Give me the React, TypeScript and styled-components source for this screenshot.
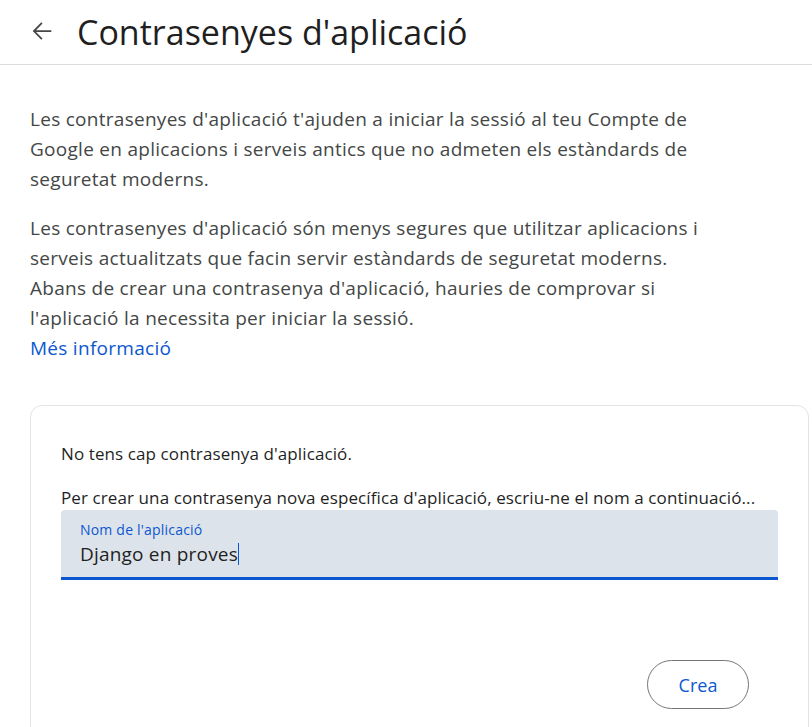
import React from "react";
import styled, { createGlobalStyle } from "styled-components";

const Global = createGlobalStyle`
  html, body { margin: 0; padding: 0; background: #ffffff; }
  body { font-family: "Open Sans", Roboto, "Liberation Sans", Arial, sans-serif; color: #1f1f1f; }
`;

const Page = styled.div`
  width: 812px;
  height: 727px;
  overflow: hidden;
`;

const Header = styled.header`
  height: 65px;
  border-bottom: 1px solid #dadce0;
  display: flex;
  align-items: center;
  padding-left: 27px;
  gap: 21px;
  box-sizing: border-box;
`;

const BackButton = styled.button`
  width: 29px;
  height: 29px;
  padding: 0;
  border: none;
  background: transparent;
  display: flex;
  align-items: center;
  justify-content: center;
  color: #444746;
  margin-top: -3px;
`;

const Title = styled.h1`
  margin: 0;
  font-family: "Open Sans", Inter, sans-serif;
  font-weight: 400;
  font-size: 34px;
  color: #1f1f1f;
  margin-top: -1px;
`;

const Content = styled.main`
  padding: 39px 0 0 30px;
  display: flex;
  flex-direction: column;
`;

const Para = styled.p<{ $last?: boolean }>`
  margin: 0 0 ${(p) => (p.$last ? 0 : 19)}px 0;
  font-size: 19px;
  letter-spacing: 0.28px;
  line-height: 30px;
  color: #444746;
  white-space: nowrap;
`;

const Link = styled.a`
  color: #0b57d0;
  text-decoration: none;
  display: block;
`;

const Card = styled.section`
  margin-top: 42px;
  margin-right: 3px;
  border: 1px solid #e3e3e3;
  border-radius: 12px;
  padding: 36px 30px 0 30px;
  height: 360px;
  display: flex;
  flex-direction: column;
`;

const CardText = styled.p`
  margin: 0;
  font-size: 17px;
  letter-spacing: 0.1px;
  line-height: 24px;
  color: #1f1f1f;
  white-space: nowrap;
`;

const Gap = styled.div<{ $h: number }>`
  height: ${(p) => p.$h}px;
`;

const Field = styled.div`
  width: 717px;
  height: 70px;
  background: #dde3ea;
  border-radius: 4px 4px 0 0;
  border-bottom: 3px solid #0b57d0;
  box-sizing: border-box;
  padding: 12px 19px 0 19px;
  display: flex;
  flex-direction: column;
`;

const FieldLabel = styled.label`
  font-size: 14px;
  letter-spacing: 0.2px;
  line-height: 16px;
  color: #0b57d0;
`;

const FieldValue = styled.div`
  font-size: 19px;
  letter-spacing: 0.2px;
  line-height: 28px;
  margin-top: 2px;
  color: #1f1f1f;
  display: flex;
  align-items: center;
`;

const Caret = styled.span`
  display: inline-block;
  width: 1px;
  height: 22px;
  background: #0b57d0;
`;

const Actions = styled.div`
  display: flex;
  justify-content: flex-end;
  padding-right: 29px;
  margin-top: 80px;
`;

const OutlineButton = styled.button`
  width: 102px;
  height: 49px;
  border: 1px solid #747775;
  border-radius: 25px;
  background: #ffffff;
  color: #0b57d0;
  font-family: "Open Sans", Inter, sans-serif;
  font-size: 18px;
  font-weight: 500;
  box-sizing: border-box;
`;

export default function App() {
  return (
    <>
      <Global />
      <Page>
        <Header>
          <BackButton aria-label="Enrere">
            <svg width="28" height="28" viewBox="0 0 24 24" fill="currentColor">
              <path d="M20 11.25H6.87l5.6-5.6L11.4 4.6 4 12l7.4 7.4 1.07-1.05-5.6-5.6H20v-1.5z" />
            </svg>
          </BackButton>
          <Title>Contrasenyes d'aplicació</Title>
        </Header>
        <Content>
          <Para>
            Les contrasenyes d'aplicació t'ajuden a iniciar la sessió al teu Compte de
            <br />
            Google en aplicacions i serveis antics que no admeten els estàndards de
            <br />
            seguretat moderns.
          </Para>
          <Para $last>
            Les contrasenyes d'aplicació són menys segures que utilitzar aplicacions i
            <br />
            serveis actualitzats que facin servir estàndards de seguretat moderns.
            <br />
            Abans de crear una contrasenya d'aplicació, hauries de comprovar si
            <br />
            l'aplicació la necessita per iniciar la sessió.
            <Link href="#">Més informació</Link>
          </Para>
          <Card>
            <CardText>No tens cap contrasenya d'aplicació.</CardText>
            <Gap $h={20} />
            <CardText>
              Per crear una contrasenya nova específica d'aplicació, escriu-ne el nom a continuació...
            </CardText>
            <Field>
              <FieldLabel>Nom de l'aplicació</FieldLabel>
              <FieldValue>
                Django en proves
                <Caret />
              </FieldValue>
            </Field>
            <Actions>
              <OutlineButton>Crea</OutlineButton>
            </Actions>
          </Card>
        </Content>
      </Page>
    </>
  );
}
